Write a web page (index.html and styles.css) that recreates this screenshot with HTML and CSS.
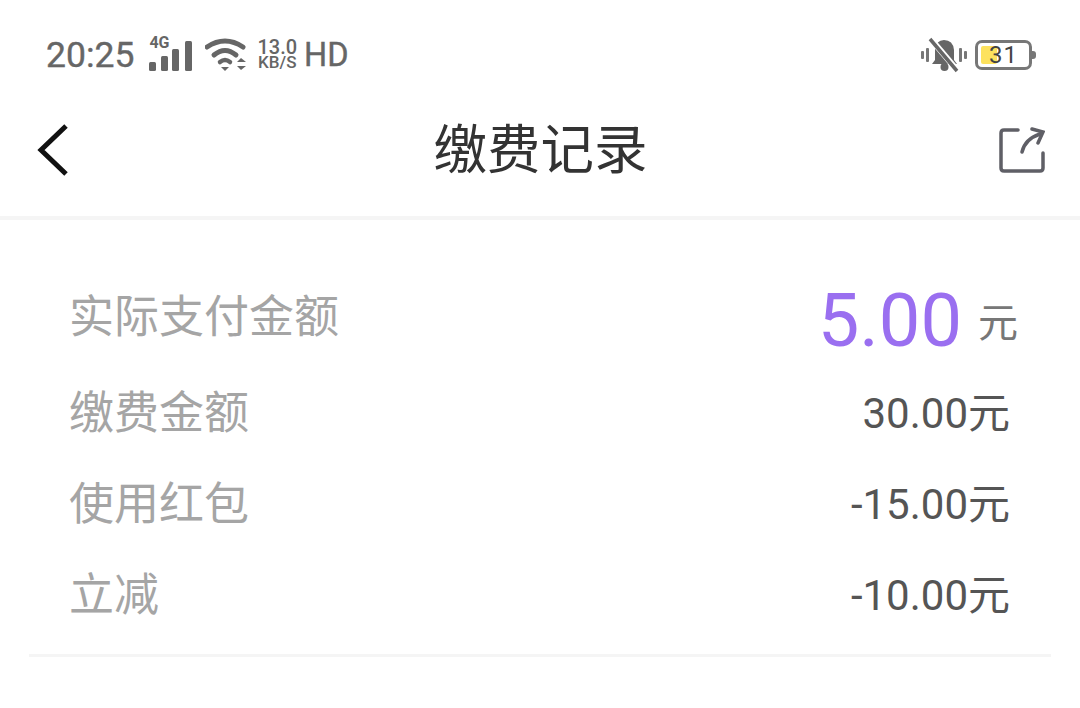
FILE: index.html
```html
<!DOCTYPE html>
<html lang="zh">
<head>
<meta charset="utf-8">
<title>缴费记录</title>
<link rel="stylesheet" href="styles.css">
</head>
<body>
<div class="status">
  <div class="status-left">
    <span class="time">20:25</span>
    <span class="net">
      <span class="net-label">4G</span>
      <svg class="signal" width="44" height="32" viewBox="0 0 44 32"><rect x="0" y="21" width="7" height="9" rx="1.500"/><rect x="12" y="15" width="7" height="15" rx="1.500"/><rect x="23" y="8" width="7" height="22" rx="1.500"/><rect x="36" y="0" width="7" height="30" rx="1.500"/></svg>
    </span>
    <svg class="wifi" width="44" height="34" viewBox="0 0 44 34"><path d="M2 9Q20 -3 38 9" fill="none" stroke="#666" stroke-width="5" stroke-linecap="round"/><path d="M9 17Q20 8 31 17" fill="none" stroke="#666" stroke-width="5" stroke-linecap="round"/><path d="M15 24Q20 20 25 24" fill="none" stroke="#666" stroke-width="4.500" stroke-linecap="round"/><path d="M16 29H24L20 33Z" fill="#666"/><path d="M32 24L36 20L41 24ZM32 28H41L36 32Z" fill="#666"/></svg>
    <span class="speed"><span>13.0</span><span class="unit">KB/S</span></span>
    <span class="hd">HD</span>
  </div>
  <div class="status-right">
    <svg width="48" height="36" viewBox="0 0 48 36"><rect x="1" y="14" width="3" height="8" rx="1" fill="#777"/><rect x="6" y="11" width="3" height="14" rx="1" fill="#777"/><rect x="39" y="11" width="3" height="14" rx="1" fill="#777"/><rect x="44" y="14" width="3" height="8" rx="1" fill="#777"/><path d="M12 27L15 23V13Q16 3 24 3Q33 3 34 13V23L37 27Z" fill="#666"/><circle cx="24.500" cy="30" r="4" fill="#666"/><path d="M10 1L37 33" stroke="#fff" stroke-width="6"/><path d="M10 2L37 34" stroke="#666" stroke-width="3.500"/></svg>
    <span class="battery"><span class="fill"></span><span class="level">31</span></span><span class="cap"></span>
  </div>
</div>
<header class="nav">
  <svg class="icon" width="46" height="52" viewBox="0 0 46 52"><path d="M30 2L5 26L30 50" fill="none" stroke="#111" stroke-width="5"/></svg>
  <h1 class="title">缴费记录</h1>
  <svg class="icon" width="46" height="46" viewBox="0 0 46 46"><path d="M19 3H5Q2 3 2 6V41Q2 44 5 44H41Q44 44 44 41V26" fill="none" stroke="#5f5f66" stroke-width="3.500" stroke-linecap="round"/><path d="M23 25Q26 12 41 7" fill="none" stroke="#5f5f66" stroke-width="3.500" stroke-linecap="round"/><path d="M33 2L44 5L39 16" fill="none" stroke="#5f5f66" stroke-width="3.500" stroke-linecap="round"/></svg>
</header>
<main class="card">
  <div class="row total">
    <span class="label">实际支付金额</span>
    <span class="paid"><span class="amount">5.00</span><span class="yuan">元</span></span>
  </div>
  <div class="row"><span class="label">缴费金额</span><span class="value">30.00元</span></div>
  <div class="row"><span class="label">使用红包</span><span class="value">-15.00元</span></div>
  <div class="row"><span class="label">立减</span><span class="value">-10.00元</span></div>
</main>
</body>
</html>
```
FILE: styles.css
```css
* { box-sizing: border-box; }
html, body { margin: 0; height: 100%; overflow: hidden; background: #fff; }
body { font-family: "Roboto", "Noto Sans CJK SC", sans-serif; }
.status { height: 106px; padding: 3px 44px 0 46px; display: flex; justify-content: space-between; align-items: center; color: #666; }
.status-left { display: flex; align-items: center; }
.time { font-size: 35.500px; line-height: 40px; font-weight: 400; -webkit-text-stroke: 0.4px #666; }
.net { position: relative; display: block; width: 44px; height: 32px; margin-left: 15px; fill: #666; }
.net-label { position: absolute; left: 0; top: -4px; font-size: 16px; line-height: 16px; font-weight: 700; }
.signal { display: block; position: absolute; top: 2px; left: 0; }
.wifi { margin-left: 12px; }
.speed { display: flex; flex-direction: column; margin-left: 8px; font-size: 20px; line-height: 16px; font-weight: 500; align-items: center; }
.unit { font-size: 17px; line-height: 15px; }
.hd { font-size: 32.500px; line-height: 40px; margin-left: 7px; -webkit-text-stroke: 0.4px #666; }
.status-right { display: flex; align-items: center; gap: 10px; }
.battery { position: relative; display: flex; align-items: center; justify-content: center; width: 57px; height: 30px; border: 3px solid #777; border-radius: 7px; margin-left: -3px; }
.fill { position: absolute; left: 3px; top: 3px; bottom: 3px; width: 16px; background: #fde25e; border-radius: 2px; }
.level { position: relative; font-size: 24px; line-height: 24px; color: #444; font-weight: 400; letter-spacing: 1px; }
.cap { width: 4px; height: 8px; margin-left: -10px; background: #777; border-radius: 0 3px 3px 0; }
.nav { height: 114px; padding: 0 35px 22px 36px; display: flex; justify-content: space-between; align-items: center; border-bottom: 4px solid #f5f5f5; }
.title { margin: 2px 0 0; font-size: 53.500px; line-height: 70px; font-weight: 400; color: #333; }
.icon { display: block; }
.card { margin: 0 29px; padding: 70px 41px 13px 40px; border-bottom: 3px solid #f5f5f5; }
.row { height: 91px; display: flex; justify-content: space-between; align-items: center; }
.row.total { height: 96px; margin-top: -20px; margin-bottom: 2px; }
.label { font-size: 45px; line-height: 60px; color: #a5a5a5; }
.value { font-size: 42px; line-height: 50px; color: #555; }
.paid { display: flex; align-items: center; margin-right: -8px; margin-top: 6px; }
.amount { font-size: 74px; line-height: 80px; color: #9a6ff0; }
.yuan { font-size: 40px; line-height: 50px; color: #777; margin-left: 16px; margin-top: 6px; }
```
